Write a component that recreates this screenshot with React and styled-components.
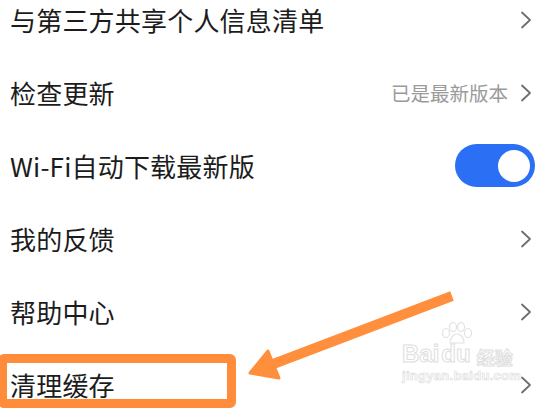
import React from "react";
import styled, { createGlobalStyle } from "styled-components";

const GlobalStyle = createGlobalStyle`
  html, body {
    margin: 0;
    padding: 0;
    background: #ffffff;
  }
  body {
    font-family: "Noto Sans CJK SC", "Noto Sans", sans-serif;
  }
`;

const Screen = styled.div`
  position: relative;
  width: 550px;
  height: 408px;
  overflow: hidden;
  background: #ffffff;
`;

const List = styled.div`
  display: flex;
  flex-direction: column;
  margin-top: -17px;
`;

const Row = styled.div`
  height: 73px;
  display: flex;
  align-items: center;
  justify-content: space-between;
  padding: 0 18px 0 10px;
`;

const Label = styled.div`
  position: relative;
  font-size: 26px;
  line-height: 38px;
  color: #1c1c1c;
  letter-spacing: 0.2px;
  white-space: nowrap;

  ${({ $highlight }) =>
    $highlight &&
    `
    &::after {
      content: "";
      position: absolute;
      left: -12px;
      top: -12px;
      width: 220px;
      height: 36px;
      border: 9px solid #ff8c3a;
      border-radius: 6px;
      box-sizing: content-box;
    }
  `}
`;

const Right = styled.div`
  display: flex;
  align-items: center;
  gap: 12px;
`;

const Value = styled.span`
  font-size: 19.5px;
  color: #9a9a9a;
`;

const Switch = styled.div`
  width: 80px;
  height: 43px;
  margin-right: -3px;
  border-radius: 22px;
  background: #2a6ff4;
  display: flex;
  align-items: center;
  justify-content: flex-end;
  padding-right: 5px;
  box-sizing: border-box;
`;

const Knob = styled.div`
  width: 32px;
  height: 32px;
  border-radius: 50%;
  background: #ffffff;
`;

const Watermark = styled.div`
  position: absolute;
  left: 402px;
  top: 322px;
  display: flex;
  flex-direction: column;
  align-items: flex-start;
  color: transparent;
  pointer-events: none;
`;

const Paw = styled.svg`
  margin-left: 38px;
  margin-bottom: -2px;
`;

const MarkTop = styled.div`
  display: flex;
  align-items: flex-end;
  gap: 2px;
  font-family: "Liberation Sans", sans-serif;
  font-size: 24px;
  font-weight: 700;
  -webkit-text-stroke: 1px #dedede;
  line-height: 1;
`;

const MarkCn = styled.span`
  font-family: "Noto Sans CJK SC", sans-serif;
  font-size: 18px;
  margin-left: 4px;
`;

const MarkUrl = styled.div`
  margin-top: 2px;
  font-family: "Liberation Sans", sans-serif;
  font-size: 13px;
  font-weight: 700;
  -webkit-text-stroke: 0.7px #dedede;
  letter-spacing: 0.3px;
`;

const Overlay = styled.svg`
  position: absolute;
  left: 0;
  top: 0;
  pointer-events: none;
`;

const Chevron = () => (
  <svg width="12" height="18" viewBox="0 0 12 18">
    <path d="M2 1.5 L10 9 L2 16.5" fill="none" stroke="#6e6e6e" strokeWidth="1.8" strokeLinecap="round" strokeLinejoin="round" />
  </svg>
);

const items = [
  { id: 1, label: "与第三方共享个人信息清单" },
  { id: 2, label: "检查更新", value: "已是最新版本" },
  { id: 3, label: "Wi-Fi自动下载最新版", toggle: true },
  { id: 4, label: "我的反馈" },
  { id: 5, label: "帮助中心" },
  { id: 6, label: "清理缓存", highlight: true },
];

const App = () => {
  return (
    <Screen>
      <GlobalStyle />
      <List>
        {items.map((item) => (
          <Row key={item.id}>
            <Label $highlight={item.highlight}>{item.label}</Label>
            {item.toggle ? (
              <Switch>
                <Knob />
              </Switch>
            ) : (
              <Right>
                {item.value && <Value>{item.value}</Value>}
                <Chevron />
              </Right>
            )}
          </Row>
        ))}
      </List>
      <Watermark>
        <Paw width="34" height="22" viewBox="0 0 34 22">
          <g fill="none" stroke="#e2e2e2" strokeWidth="1.2">
            <ellipse cx="6" cy="11" rx="3.5" ry="4.5" />
            <ellipse cx="13" cy="5" rx="3.5" ry="4.5" />
            <ellipse cx="21" cy="5" rx="3.5" ry="4.5" />
            <ellipse cx="28" cy="11" rx="3.5" ry="4.5" />
            <path d="M10 21 C10 15 14 12 17 12 C20 12 24 15 24 21 Z" />
          </g>
        </Paw>
        <MarkTop>
          Bai
          <span>du</span>
          <MarkCn>经验</MarkCn>
        </MarkTop>
        <MarkUrl>jingyan.baidu.com</MarkUrl>
      </Watermark>
      <Overlay width="550" height="408" viewBox="0 0 550 408">
        <line x1="452" y1="296" x2="268" y2="366" stroke="#ff8f3c" strokeWidth="10" />
        <polygon points="250,373 268,351 279,378" fill="#ff8f3c" stroke="#ff8f3c" strokeWidth="3" strokeLinejoin="round" />
      </Overlay>
    </Screen>
  );
};

export default App;
